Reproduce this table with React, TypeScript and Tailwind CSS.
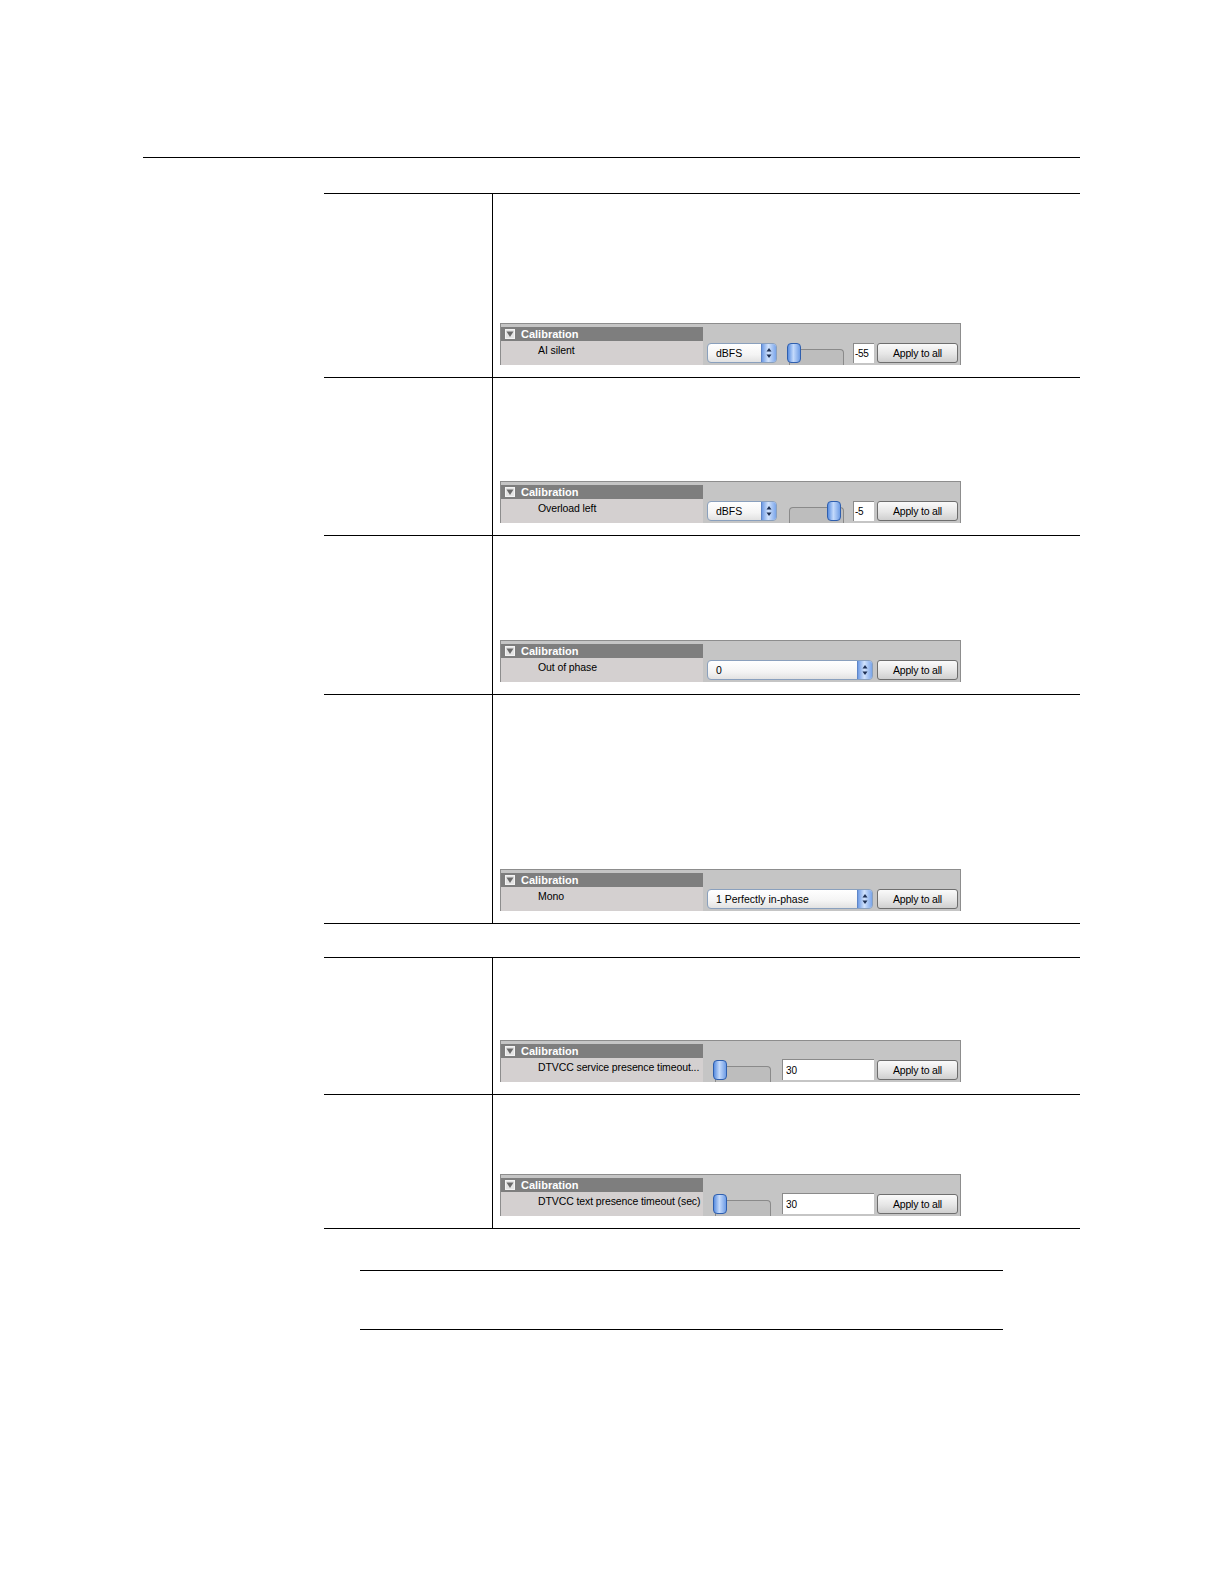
// Page de manuel : deux tableaux de paramètres, chacun avec une capture
// du panneau "Calibration" en bas de la colonne de droite.

type PanelKind =
  | { type: "level"; value: string; thumb: "left" | "right" }
  | { type: "choice"; value: string }
  | { type: "timeout"; value: string };

interface PanelProps {
  label: string;
  kind: PanelKind;
}

function CollapseIcon() {
  return (
    <svg width="10" height="10" viewBox="0 0 10 10" className="shrink-0">
      <rect x="0.5" y="0.5" width="9" height="9" fill="#e4e4e4" stroke="#f4f4f4" />
      <polygon points="1.5,2.5 8.5,2.5 5,8" fill="#6a6a6a" />
    </svg>
  );
}

function SpinArrows() {
  return (
    <svg width="6" height="12" viewBox="0 0 6 12">
      <polygon points="3,1 5.5,4.5 0.5,4.5" fill="#1d2f52" />
      <polygon points="0.5,7.5 5.5,7.5 3,11" fill="#1d2f52" />
    </svg>
  );
}

function Select({ value, wide }: { value: string; wide?: boolean }) {
  return (
    <div
      className={`flex h-[20px] ${
        wide ? "w-[166px]" : "w-[70px]"
      } rounded-[4px] border border-[#8aa0bd] bg-[linear-gradient(#ffffff,#f4f4f4_60%,#e2e2e2)] overflow-hidden`}
    >
      <span className="flex-1 pl-[8px] text-[10.5px] leading-[19px] text-black whitespace-nowrap">
        {value}
      </span>
      <span className="w-[15px] flex items-center justify-center border-l border-[#5e86c8] bg-[linear-gradient(90deg,#6f9be4,#d2e3fc_45%,#7aa5ea)]">
        <SpinArrows />
      </span>
    </div>
  );
}

function Slider({ thumb, width }: { thumb: "left" | "right"; width: string }) {
  return (
    <div className={`relative h-[22px] ${width} self-end mb-[-2px]`}>
      <div className="absolute bottom-0 left-[2px] right-0 h-[16px] rounded-t-[4px] border-t border-l border-r border-[#8a8a8a] bg-[#bdbdbd]" />
      <div
        className={`absolute top-0 ${
          thumb === "left" ? "left-0" : "right-[3px]"
        } h-[20px] w-[14px] rounded-[4px] border border-[#2f5fae] bg-[linear-gradient(90deg,#5a8ee0,#c4dafb_45%,#6f9de6)]`}
      />
    </div>
  );
}

function ApplyButton() {
  return (
    <div className="ml-[3px] h-[20px] w-[81px] rounded-[3px] border border-[#6e6e6e] bg-[linear-gradient(#fafafa,#e6e6e6_55%,#cfcfcf)] text-center text-[10.5px] tracking-[-0.2px] leading-[18px] text-black">
      Apply to all
    </div>
  );
}

function CalibrationPanel({ label, kind }: PanelProps) {
  return (
    <div className="flex h-[42px] w-[461px] border border-b-0 border-[#8d8d8d] bg-[#c5c5c5]">
      <div className="flex w-[202px] shrink-0 flex-col pt-[3px]">
        <div className="flex h-[14px] items-center bg-[#7e7e7e] pl-[4px]">
          <CollapseIcon />
          <span className="ml-[6px] text-[11px] font-bold leading-none text-white">
            Calibration
          </span>
        </div>
        <div className="flex-1 bg-[#d4d0d0] pl-[37px] pt-[2px] text-[10.5px] tracking-[-0.1px] text-black whitespace-nowrap">
          {label}
        </div>
      </div>
      <div className="flex flex-1 items-end pb-[2px] pl-[4px]">
        {kind.type === "level" ? (
          <>
            <Select value="dBFS" />
            <div className="ml-[10px] flex">
              <Slider thumb={kind.thumb} width="w-[57px]" />
            </div>
            <div className="ml-[9px] h-[20px] w-[21px] border-t border-l border-[#8a8a8a] bg-white pl-[1px] text-[10px] tracking-[-0.3px] leading-[19px] text-black">
              {kind.value}
            </div>
            <ApplyButton />
          </>
        ) : null}
        {kind.type === "choice" ? (
          <>
            <Select value={kind.value} wide />
            <div className="ml-[1px]" />
            <ApplyButton />
          </>
        ) : null}
        {kind.type === "timeout" ? (
          <>
            <div className="ml-[6px] flex">
              <Slider thumb="left" width="w-[58px]" />
            </div>
            <div className="ml-[11px] h-[21px] w-[92px] border-t border-l border-[#8a8a8a] bg-white pl-[3px] text-[10px] leading-[21px] text-black">
              {kind.value}
            </div>
            <ApplyButton />
          </>
        ) : null}
      </div>
    </div>
  );
}

function Row({ height, children }: { height: string; children: React.ReactNode }) {
  return (
    <div className={`flex border-t border-black ${height}`}>
      <div className="w-[169px] shrink-0 border-r border-black" />
      <div className="flex flex-1 flex-col justify-end pb-[12px] pl-[7px]">{children}</div>
    </div>
  );
}

export default function App() {
  return (
    <div className="min-h-[1584px] w-[1224px] bg-white font-['Liberation_Sans',Arial,sans-serif]">
      <div className="pl-[143px] pt-[157px]">
        <div className="w-[937px] border-t border-black" />
      </div>

      <div className="ml-[324px] mt-[35px] w-[756px]">
        <Row height="h-[184px]">
          <CalibrationPanel label="AI silent" kind={{ type: "level", value: "-55", thumb: "left" }} />
        </Row>
        <Row height="h-[158px]">
          <CalibrationPanel label="Overload left" kind={{ type: "level", value: "-5", thumb: "right" }} />
        </Row>
        <Row height="h-[159px]">
          <CalibrationPanel label="Out of phase" kind={{ type: "choice", value: "0" }} />
        </Row>
        <Row height="h-[229px]">
          <CalibrationPanel label="Mono" kind={{ type: "choice", value: "1 Perfectly in-phase" }} />
        </Row>
        <div className="border-t border-black" />
      </div>

      <div className="ml-[324px] mt-[33px] w-[756px]">
        <Row height="h-[137px]">
          <CalibrationPanel
            label="DTVCC service presence timeout..."
            kind={{ type: "timeout", value: "30" }}
          />
        </Row>
        <Row height="h-[134px]">
          <CalibrationPanel
            label="DTVCC text presence timeout (sec)"
            kind={{ type: "timeout", value: "30" }}
          />
        </Row>
        <div className="border-t border-black" />
      </div>

      <div className="ml-[360px] mt-[41px] w-[643px]">
        <div className="border-t border-black" />
        <div className="h-[58px]" />
        <div className="border-t border-black" />
      </div>
    </div>
  );
}
